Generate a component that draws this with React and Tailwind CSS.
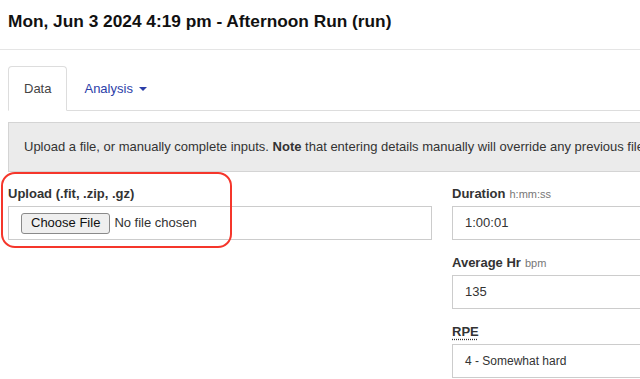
import React from "react";

const Label = ({ children, hint }) => (
  <label className="mb-[5px] flex h-[15px] items-baseline text-[13px] font-bold leading-[15px] text-[#333]">
    {children}
    {hint && (
      <span className="ml-1 text-[11px] font-normal leading-[15px] text-[#777]">
        {hint}
      </span>
    )}
  </label>
);

const TextInput = ({ value, small }) => (
  <div
    className={`flex h-[34px] items-center border border-[#ccc] bg-white px-[12px] text-[#333] ${
      small ? "text-[12px]" : "text-[13px]"
    }`}
  >
    {value}
  </div>
);

export default function App() {
  return (
    <div className="h-[379px] w-full overflow-hidden bg-white font-['Liberation_Sans',Arial,sans-serif] text-[#333]">
      {/* Page title */}
      <div className="h-[50px] border-b border-[#e5e5e5] px-2 pt-[10px]">
        <h1 className="whitespace-nowrap text-[17.3px] font-bold leading-[22px] text-[#111]">
          Mon, Jun 3 2024 4:19 pm - Afternoon Run (run)
        </h1>
      </div>

      <div className="w-[876px] px-2 pt-4">
        {/* Tabs */}
        <ul className="flex border-b border-[#ddd] text-[13px]">
          <li className="-mb-px mr-[2px]">
            <span className="flex h-[45px] items-center rounded-t-[4px] border border-[#ddd] border-b-transparent bg-white px-[15px] text-[#444]">
              Data
            </span>
          </li>
          <li className="-mb-px">
            <span className="flex h-[45px] items-center px-[15px] text-[#2b3ea8]">
              Analysis
              <span className="ml-[6px] h-0 w-0 border-x-[4px] border-t-[4px] border-x-transparent border-t-[#2b3ea8]" />
            </span>
          </li>
        </ul>

        {/* Notice */}
        <div className="mt-[11px] overflow-hidden whitespace-nowrap border border-[#d4d4d4] bg-[#ebebeb] px-[15px] py-[15px] text-[13px] leading-[18px] text-[#333]">
          Upload a file, or manually complete inputs. <strong>Note</strong> that
          entering details manually will override any previous file data.
        </div>

        {/* Form */}
        <div className="mt-[14px] grid grid-cols-[424px_424px] gap-x-5">
          <div className="relative">
            <Label>Upload (.fit, .zip, .gz)</Label>
            <div className="flex h-[34px] items-center border border-[#ccc] bg-white pl-[12px] text-[13px]">
              <span className="flex h-[21px] items-center rounded-[3px] border border-[#8a8a8a] bg-[#efefef] px-[9px] text-[#111]">
                Choose File
              </span>
              <span className="ml-[4px] text-[#333]">No file chosen</span>
            </div>
            {/* annotation */}
            <div className="pointer-events-none absolute -left-[7px] -top-[14px] h-[76px] w-[231px] rounded-[14px] border-2 border-[#f5362b]" />
          </div>

          <div>
            <div className="mb-[15px]">
              <Label hint="h:mm:ss">Duration</Label>
              <TextInput value="1:00:01" />
            </div>
            <div className="mb-[15px]">
              <Label hint="bpm">Average Hr</Label>
              <TextInput value="135" />
            </div>
            <div>
              <Label>
                <abbr
                  title="Rating of perceived exertion"
                  className="underline decoration-dotted underline-offset-[3px]"
                >
                  RPE
                </abbr>
              </Label>
              <TextInput value="4 - Somewhat hard" small />
            </div>
          </div>
        </div>
      </div>
    </div>
  );
}
